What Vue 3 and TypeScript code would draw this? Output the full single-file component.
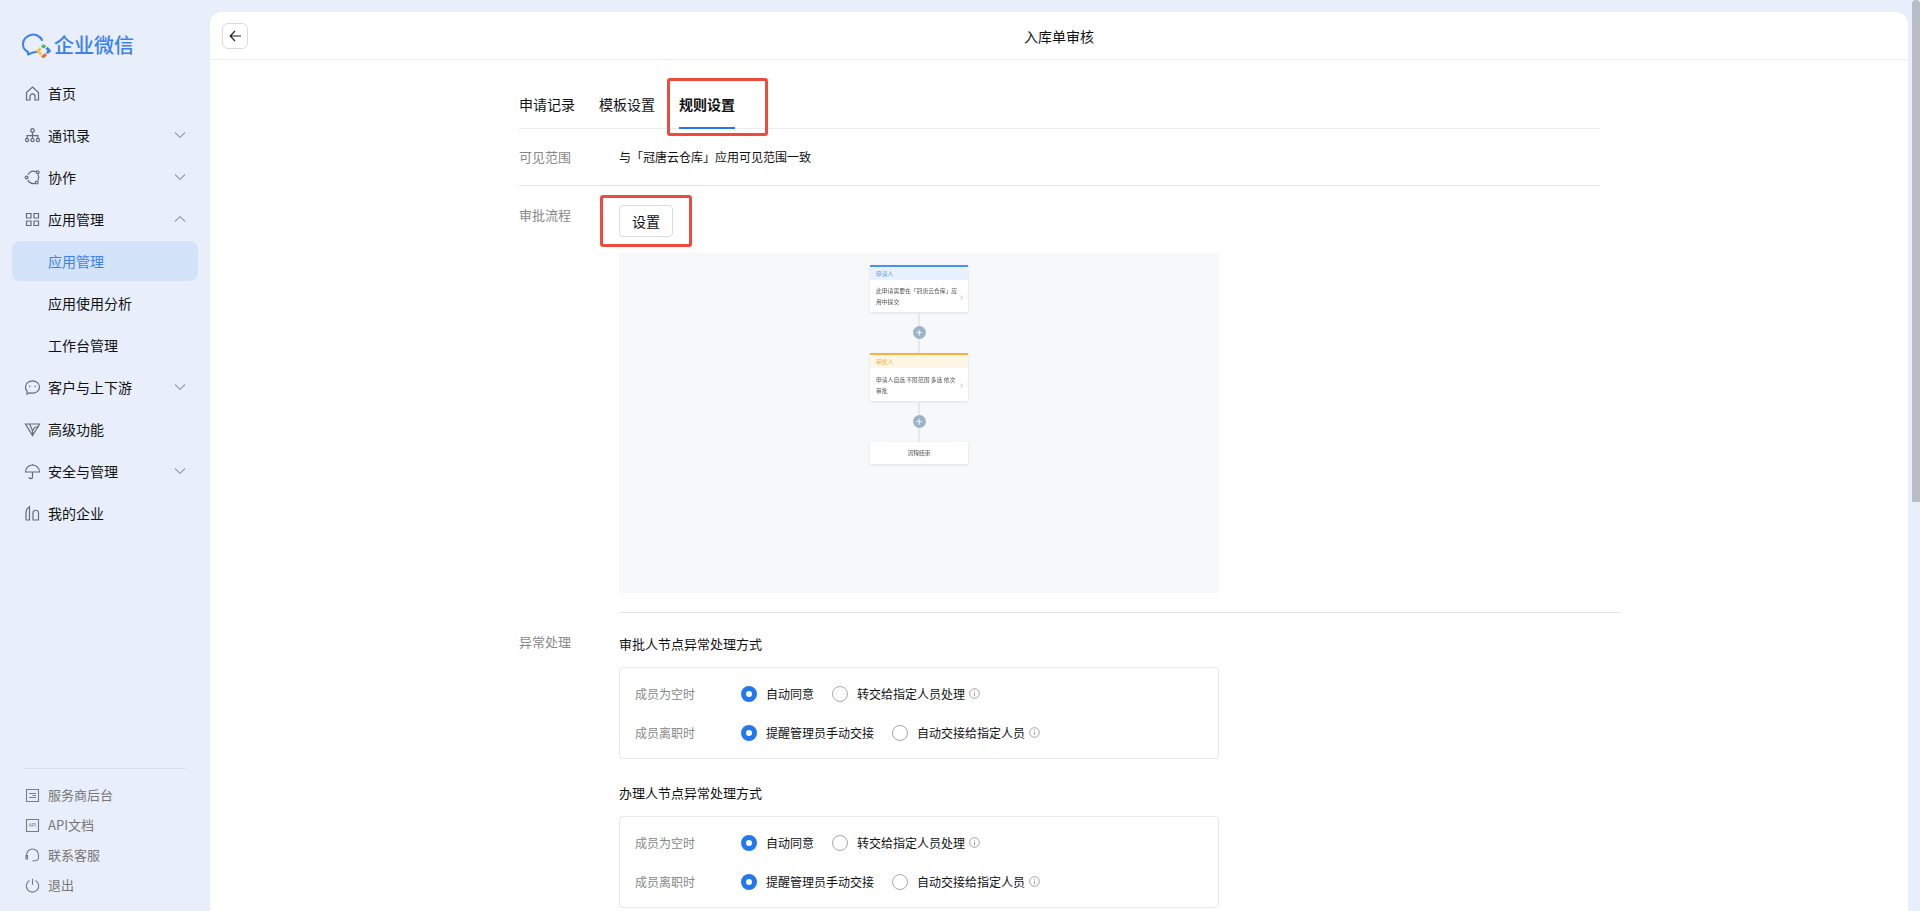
<script setup lang="ts">
interface NavItem {
  label: string
  icon?: string[]
  arrow?: 'up' | 'down'
  active?: boolean
}

const nav: NavItem[] = [
  { label: '首页', icon: ['M2.5 7.5 8.5 2l6 5.5V15h-3.5v-3.6a2.5 2.5 0 0 0-5 0V15H2.5z'] },
  {
    label: '通讯录',
    arrow: 'down',
    icon: [
      'M6.7 3.5a1.8 1.8 0 1 0 3.6 0 1.8 1.8 0 1 0-3.6 0z',
      'M1.5 13a1.6 1.6 0 1 0 3.2 0 1.6 1.6 0 1 0-3.2 0zM6.9 13a1.6 1.6 0 1 0 3.2 0 1.6 1.6 0 1 0-3.2 0zM12.3 13a1.6 1.6 0 1 0 3.2 0 1.6 1.6 0 1 0-3.2 0z',
      'M3.1 11V8.6h10.8V11M8.5 5.5v5.5'
    ]
  },
  {
    label: '协作',
    arrow: 'down',
    icon: [
      'M12 2.600A6.800 6.800 0 0 0 4 5.800M3.800 11.400A6.800 6.800 0 0 0 11 14.400M14 5.200a6.800 6.800 0 0 1 0 6.400',
      'M12.300 3.300a1.400 1.400 0 1 0 2.800 0 1.400 1.400 0 1 0-2.800 0zM1.200 8.500a1.400 1.400 0 1 0 2.800 0 1.400 1.400 0 1 0-2.800 0zM11.300 13.600a1.400 1.400 0 1 0 2.800 0 1.400 1.400 0 1 0-2.800 0z'
    ]
  },
  {
    label: '应用管理',
    arrow: 'up',
    icon: [
      'M2.500 2.500h4.500v4.500h-4.500zM10 2.500h4.500v4.500H10zM2.500 10h4.500v4.500h-4.500zM10 10h4.500v4.500H10z'
    ]
  },
  { label: '应用管理', active: true },
  { label: '应用使用分析' },
  { label: '工作台管理' },
  {
    label: '客户与上下游',
    arrow: 'down',
    icon: [
      'M8.500 1.800c3.900 0 7 2.700 7 6.200s-3.100 6.200-7 6.200c-1 0-1.900-.2-2.700-.5L3 15v-2.800C2 11.100 1.500 9.600 1.500 8c0-3.500 3.100-6.200 7-6.200z',
      'M5.800 6.800v1.200M11.200 6.800v1.200'
    ]
  },
  {
    label: '高级功能',
    icon: ['M1.500 3h14l-7 11.500zM5.500 3l3 6.500L11 6M8.500 9.500V14.500M11 6h4']
  },
  {
    label: '安全与管理',
    arrow: 'down',
    icon: ['M1.500 9a7 7 0 0 1 14 0zM8.500 2V1M8.500 9v5a1.700 1.700 0 0 1-3.400 0']
  },
  {
    label: '我的企业',
    icon: ['M2 15V7.500C2 5 3.500 3 5.500 1.800V15zM9 15V8a2.500 2.500 0 0 1 5.500 0v7z']
  }
]

const foot: { label: string; icon: string[]; small?: string }[] = [
  { label: '服务商后台', icon: ['M2.500 2.500h12v12h-12zM5 6.500h7M5 10.500h7M8.500 8.500h3.500'] },
  { label: 'API文档', icon: ['M2.500 2.500h12v12h-12z'], small: 'API' },
  {
    label: '联系客服',
    icon: [
      'M2.500 10.500V8a6 6 0 0 1 12 0v1',
      'M14.500 9v1.800a3 3 0 0 1-3 3H8.500',
      'M2 8.500h1.500v3.500H2z'
    ]
  },
  {
    label: '退出',
    icon: ['M5.500 3.500a6.200 6.200 0 1 0 6 0M8.500 1.800v6']
  }
]

const groups = [
  { title: '审批人节点异常处理方式' },
  { title: '办理人节点异常处理方式' }
]

const rows = [
  { label: '成员为空时', on: '自动同意', off: '转交给指定人员处理' },
  { label: '成员离职时', on: '提醒管理员手动交接', off: '自动交接给指定人员' }
]
</script>

<template>
  <div class="page">
    <aside class="side">
      <div class="logo">
        <svg class="logo-mark" width="29" height="26" viewBox="0 0 29 26">
          <path
            d="M20 8A10 9.500 0 0 0 1 12.500C1 16 3 18.500 6 20L6 22.500 11 20.500 15 19.800"
            fill="none"
            stroke="#3b82f0"
            stroke-width="2"
            stroke-linecap="round"
            stroke-linejoin="round"
          />
          <g fill="none" stroke-width="2.800" stroke-linejoin="round">
            <path d="M19.800 15.200 21.500 13.800 23.500 15.200" stroke="#5ab85c" />
            <path d="M24.500 15.800 27.500 19 24.800 21" stroke="#3b82f0" />
            <path d="M24 21.800 21.500 24.800 20 23.200" stroke="#ef6a3c" />
            <path d="M19.300 22.300 15.500 19 18.800 16.300" stroke="#f5c243" />
          </g>
        </svg>
        <span class="logo-text">企业微信</span>
      </div>

      <nav class="nav">
        <div v-for="(item, i) in nav" :key="i" class="nav-item" :class="{ active: item.active }">
          <svg v-if="item.icon" class="nav-icon" width="17" height="17" viewBox="0 0 17 17">
            <path v-for="(d, j) in item.icon" :key="j" :d="d" />
          </svg>
          <span class="nav-label">{{ item.label }}</span>
          <svg v-if="item.arrow" class="chev" width="12" height="8" viewBox="0 0 12 8">
            <path v-if="item.arrow === 'down'" d="M1 1.500l5 5 5-5" />
            <path v-else d="M1 6.500l5-5 5 5" />
          </svg>
        </div>
      </nav>

      <div class="foot">
        <div v-for="f in foot" :key="f.label" class="foot-item">
          <span class="foot-icon">
            <svg width="17" height="17" viewBox="0 0 17 17">
              <path v-for="(d, j) in f.icon" :key="j" :d="d" />
            </svg>
            <em v-if="f.small" class="foot-small">{{ f.small }}</em>
          </span>
          <span>{{ f.label }}</span>
        </div>
      </div>
    </aside>

    <main class="card">
      <header class="head">
        <button class="back" type="button" aria-label="返回">
          <svg width="13" height="12" viewBox="0 0 13 12">
            <path d="M6 1 1.200 6 6 11M1.500 6H12" />
          </svg>
        </button>
        <h1 class="title">入库单审核</h1>
      </header>

      <div class="body">
        <div class="tabs">
          <span class="tab">申请记录</span>
          <span class="tab">模板设置</span>
          <span class="tab current">规则设置</span>
          <i class="mark mark-tab"></i>
        </div>

        <div class="row scope">
          <span class="row-label">可见范围</span>
          <span class="scope-text">与「冠唐云仓库」应用可见范围一致</span>
        </div>

        <div class="row flow-row">
          <span class="row-label">审批流程</span>
          <div class="flow-col">
            <button class="set" type="button">设置</button>
            <i class="mark mark-set"></i>
            <div class="preview">
              <div class="node blue">
                <div class="node-head">申请人</div>
                <div class="node-body">
                  <span>此申请需要在「冠唐云仓库」应用中提交</span><b>›</b>
                </div>
              </div>
              <div class="link"><i class="plus">+</i></div>
              <div class="node orange">
                <div class="node-head">审批人</div>
                <div class="node-body tall">
                  <span>申请人自选 不限范围 多选 依次审批</span><b>›</b>
                </div>
              </div>
              <div class="link"><i class="plus">+</i></div>
              <div class="node end">流程结束</div>
            </div>
          </div>
        </div>

        <div class="rule"></div>

        <div class="row except">
          <span class="row-label">异常处理</span>
          <div class="groups">
            <section v-for="g in groups" :key="g.title" class="group">
              <h2 class="group-title">{{ g.title }}</h2>
              <div class="box">
                <div v-for="r in rows" :key="r.label" class="opt-row">
                  <span class="opt-label">{{ r.label }}</span>
                  <span class="radio on"></span>
                  <span class="opt-text">{{ r.on }}</span>
                  <span class="radio"></span>
                  <span class="opt-text">{{ r.off }}</span>
                  <svg class="info" width="11" height="11" viewBox="0 0 11 11">
                    <circle cx="5.500" cy="5.500" r="4.800" />
                    <path d="M5.500 4.800v3.400M5.500 2.800v1" />
                  </svg>
                </div>
              </div>
            </section>
          </div>
        </div>
      </div>
    </main>

    <div class="thumb"></div>
  </div>
</template>

<style>
html,
body {
  margin: 0;
  overflow: hidden;
}
</style>

<style scoped>
.page {
  position: relative;
  display: flex;
  height: 100vh;
  overflow: hidden;
  background: #e8eefa;
  color: #111;
  font: 14px/20px "Noto Sans CJK SC", "Noto Sans", sans-serif;
}

.side {
  display: flex;
  flex: none;
  flex-direction: column;
  width: 210px;
}

.logo {
  display: flex;
  align-items: center;
  gap: 3px;
  height: 26px;
  margin: 32px 0 14px 22px;
}

.logo-text {
  color: #3b82f0;
  font-size: 20px;
  font-weight: 500;
}

.nav {
  display: flex;
  flex-direction: column;
}

.nav-item {
  position: relative;
  display: flex;
  align-items: center;
  height: 42px;
  margin: 0 12px;
  padding: 0 12px 0 36px;
}

.nav-item.active {
  height: 40px;
  margin: 1px 12px;
  border-radius: 8px;
  background: #d3e3fa;
  color: #3b82f0;
}

.nav-icon {
  position: absolute;
  left: 12px;
  fill: none;
  stroke: #666b75;
  stroke-width: 1.200;
}

.nav-label {
  flex: 1;
}

.chev {
  fill: none;
  stroke: #9aa0aa;
  stroke-width: 1.100;
}

.foot {
  margin: auto 24px 11px;
  padding-top: 11px;
  border-top: 1px solid #d8dfec;
}

.foot-item {
  display: flex;
  align-items: center;
  gap: 7px;
  height: 30px;
  color: #777;
  font-size: 13px;
}

.foot-icon {
  position: relative;
  display: flex;
}

.foot-icon svg {
  fill: none;
  stroke: #777c85;
  stroke-width: 1.100;
}

.foot-small {
  position: absolute;
  inset: 0;
  color: #777c85;
  font-size: 5px;
  font-style: normal;
  line-height: 15px;
  text-align: center;
}

.card {
  display: flex;
  flex: none;
  flex-direction: column;
  width: 1698px;
  margin-top: 12px;
  border-radius: 12px 12px 0 0;
  background: #fff;
}

.head {
  position: relative;
  display: flex;
  align-items: center;
  justify-content: center;
  flex: none;
  height: 47px;
  border-bottom: 1px solid #ececec;
}

.back {
  position: absolute;
  top: 11px;
  left: 12px;
  display: flex;
  align-items: center;
  justify-content: center;
  width: 26px;
  height: 26px;
  padding: 0;
  border: 1px solid #dcdcdc;
  border-radius: 6px;
  background: #fff;
}

.back svg {
  fill: none;
  stroke: #222;
  stroke-width: 1.200;
}

.title {
  margin: 0;
  font-size: 14px;
  font-weight: 400;
}

.body {
  width: 1081px;
  padding-left: 309px;
}

.tabs {
  position: relative;
  display: flex;
  gap: 24px;
  height: 68px;
  border-bottom: 1px solid #ececec;
}

.tab {
  box-sizing: border-box;
  height: 69px;
  padding-top: 34px;
}

.tab.current {
  border-bottom: 2px solid #2378f0;
  font-weight: 700;
}

.mark {
  position: absolute;
  z-index: 2;
  box-sizing: border-box;
  border: 3px solid #ef4a3c;
  border-radius: 3px;
}

.mark-tab {
  top: 18px;
  left: 148px;
  width: 101px;
  height: 58px;
}

.row {
  display: flex;
}

.row-label {
  flex: none;
  width: 100px;
  color: #888;
  font-size: 13px;
}

.scope {
  align-items: center;
  height: 56px;
  border-bottom: 1px solid #e4e4e4;
}

.scope-text {
  font-size: 12px;
}

.flow-row {
  padding-top: 19px;
}

.flow-col {
  position: relative;
  display: flex;
  flex-direction: column;
  align-items: flex-start;
}

.mark-set {
  top: -10px;
  left: -19px;
  width: 92px;
  height: 52px;
}

.set {
  width: 54px;
  height: 32px;
  padding: 0;
  border: 1px solid #dcdcdc;
  border-radius: 4px;
  background: #fff;
  color: #111;
  font: inherit;
}

.preview {
  display: flex;
  flex-direction: column;
  align-items: center;
  box-sizing: border-box;
  width: 600px;
  height: 340px;
  margin-top: 16px;
  padding-top: 12px;
  background: #f7f8fa;
}

.node {
  box-sizing: border-box;
  width: 98px;
  background: #fff;
  box-shadow: 0 1px 3px rgba(0, 0, 0, 0.1);
  color: #555;
  font-size: 5.800px;
  line-height: 11px;
  filter: blur(0.25px);
}

.node-head {
  height: 13px;
  padding-left: 6px;
  line-height: 13px;
}

.node-body {
  display: flex;
  align-items: center;
  gap: 2px;
  height: 32px;
  padding: 0 5px 0 6px;
}

.node-body.tall {
  height: 33px;
}

.node-body span {
  flex: 1;
}

.node-body b {
  color: #bbb;
  font-size: 11px;
  font-weight: 400;
}

.blue {
  border-top: 2px solid #4a90f5;
}

.blue .node-head {
  background: #e7f1ff;
  color: #5a9bf5;
}

.orange {
  border-top: 2px solid #f7b23b;
}

.orange .node-head {
  background: #fff6e6;
  color: #f2b24a;
}

.end {
  height: 22px;
  line-height: 22px;
  text-align: center;
}

.link {
  position: relative;
  display: flex;
  align-items: center;
  justify-content: center;
  width: 2px;
  height: 41px;
  background: #e6e8ec;
}

.plus {
  position: absolute;
  display: flex;
  align-items: center;
  justify-content: center;
  flex: none;
  width: 13px;
  height: 13px;
  border-radius: 50%;
  background: #9db3cb;
  color: #fff;
  font-size: 11px;
  font-style: normal;
  line-height: 1;
}

.rule {
  width: 1001px;
  height: 1px;
  margin: 19px 0 0 100px;
  background: #e4e4e4;
}

.except {
  padding-top: 19px;
}

.group {
  margin-bottom: 24px;
}

.group-title {
  margin: 2px 0 13px;
  font-size: 13px;
  font-weight: 400;
}

.box {
  box-sizing: border-box;
  width: 600px;
  height: 92px;
  padding: 6px 15px;
  border: 1px solid #e8e8e8;
  border-radius: 4px;
}

.opt-row {
  display: flex;
  align-items: center;
  height: 39px;
}

.opt-label {
  width: 106px;
  color: #888;
  font-size: 12px;
}

.radio {
  flex: none;
  box-sizing: border-box;
  width: 16px;
  height: 16px;
  margin-right: 9px;
  border: 1px solid #a8a8a8;
  border-radius: 50%;
  background: #fff;
}

.radio.on {
  border: 5px solid #2378f0;
}

.opt-text {
  margin-right: 18px;
  font-size: 12px;
}

.info {
  margin-left: -14px;
  fill: none;
  stroke: #999;
  stroke-width: 0.900;
}

.thumb {
  position: absolute;
  top: 0;
  right: 0;
  width: 8px;
  height: 502px;
  border-radius: 4px 4px 0 0;
  background: #b8bcc6;
}
</style>
